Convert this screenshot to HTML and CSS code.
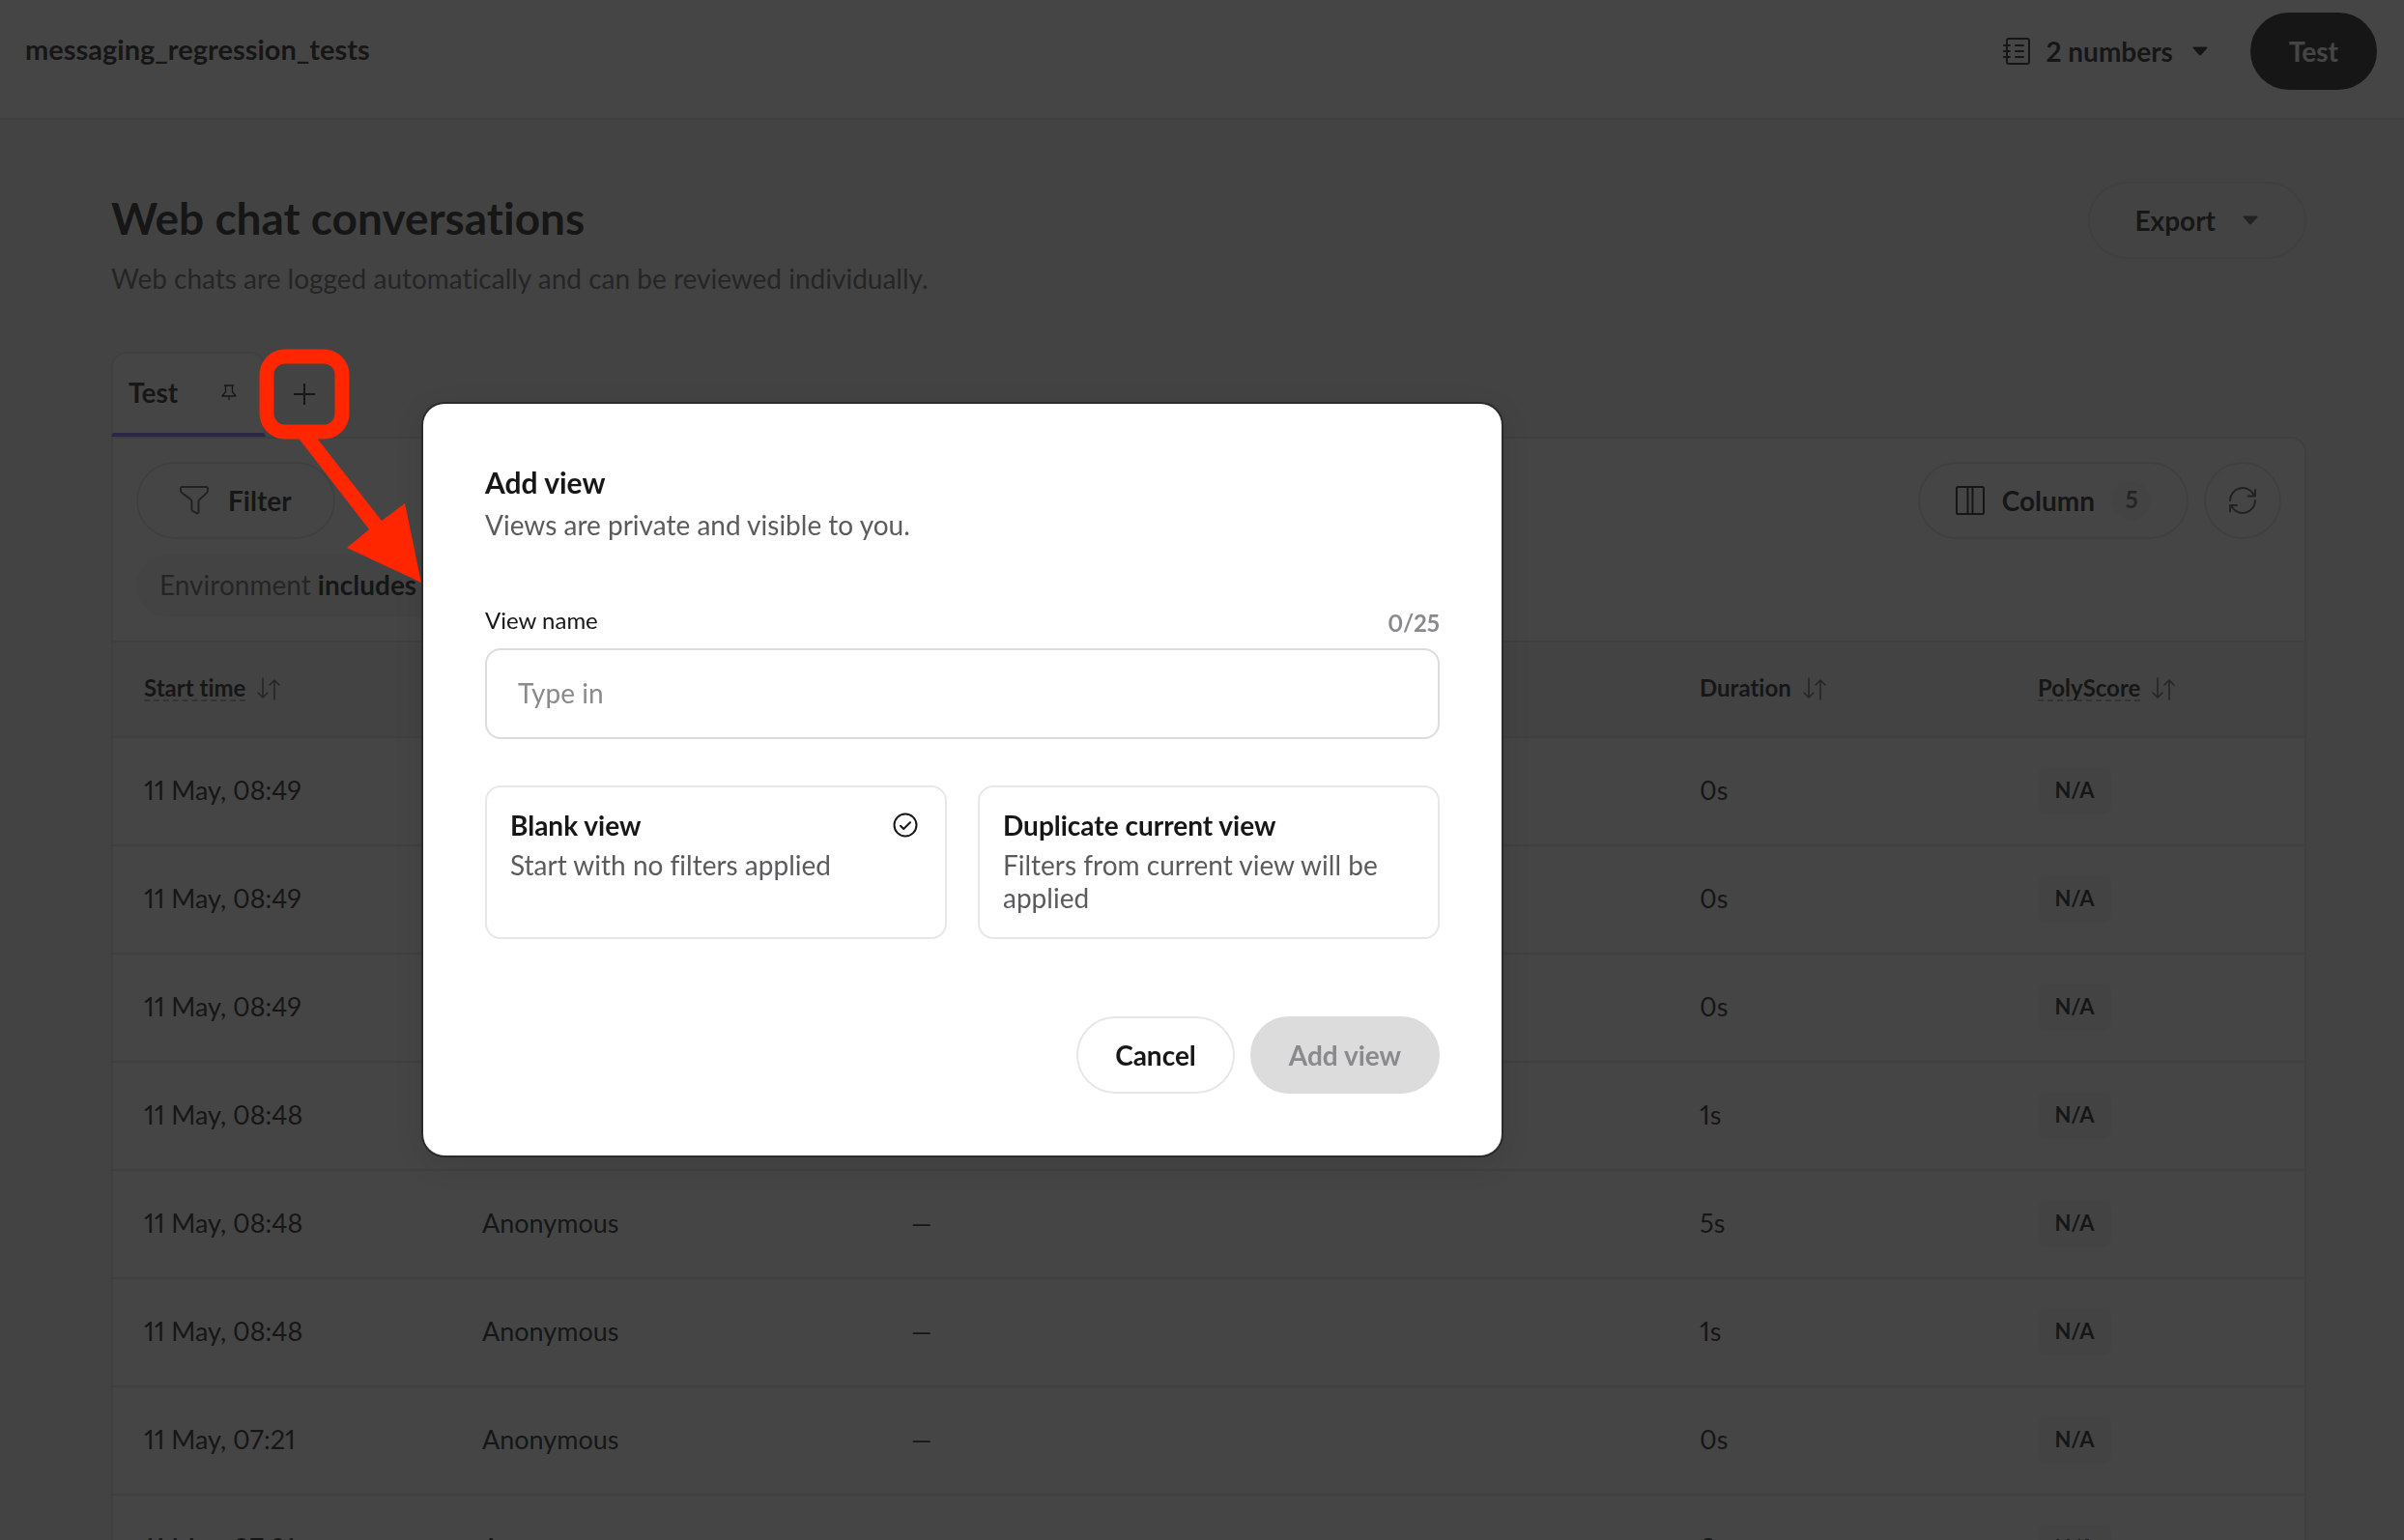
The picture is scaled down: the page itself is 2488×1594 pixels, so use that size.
FILE: index.html
```html
<!DOCTYPE html>
<html lang="en">
<head>
    <meta charset="UTF-8">
    <meta name="viewport" content="width=device-width, initial-scale=1.0">
    <title>Web chat conversations</title>
    <link rel="stylesheet" href="styles.css">
</head>
<body>
    <!-- Shared icons -->
    <svg class="sprite" aria-hidden="true">
        <symbol id="icon-caret" viewBox="0 0 16 10">
            <path d="M1.4 0.5h13.2c0.9 0 1.2 0.9 0.6 1.5L9 9c-0.6 0.6-1.4 0.6-2 0L0.8 2C0.2 1.400 0.500 0.500 1.400 0.500z" fill="currentColor"/>
        </symbol>
        <symbol id="icon-sort" viewBox="0 0 24 24">
            <path d="M6 1v20M1 16l5 5 5-5M18 23V3M13 8l5-5 5 5" fill="none" stroke="currentColor" stroke-width="1.6" stroke-linecap="round" stroke-linejoin="round"/>
        </symbol>
    </svg>

    <header class="topbar">
        <div class="project-name">messaging_regression_tests</div>
        <div class="topbar-actions">
            <button class="numbers-button" type="button">
                <svg class="icon-notebook" viewBox="0 0 28 28" fill="none" stroke="currentColor" stroke-width="2" stroke-linecap="round">
                    <rect x="4" y="1" width="23" height="26" rx="2"/>
                    <path d="M1 8h6M1 14h6M1 20h6M13 8h8M13 14h8M13 20h8"/>
                </svg>
                2 numbers
                <svg class="icon-caret"><use href="#icon-caret"/></svg>
            </button>
            <button class="btn btn-dark" type="button">Test</button>
        </div>
    </header>

    <main class="page">
        <div class="page-head">
            <div>
                <h1>Web chat conversations</h1>
                <p class="page-subtitle">Web chats are logged automatically and can be reviewed individually.</p>
            </div>
            <button class="btn btn-export" type="button">
                Export
                <svg class="icon-caret"><use href="#icon-caret"/></svg>
            </button>
        </div>

        <div class="tabs">
            <button class="tab" type="button">
                Test
                <svg class="icon-pin" viewBox="0 0 16 16" fill="none" stroke="currentColor" stroke-width="1.3" stroke-linejoin="round">
                    <path d="M3 1h10M4.500 1v6.500L1 12h14l-3.500-4.500V1M8 12v4"/>
                </svg>
            </button>
            <button class="tab-add" type="button" aria-label="Add view">
                <svg viewBox="0 0 22 22" stroke="currentColor" stroke-width="2"><path d="M11 0v22M0 11h22"/></svg>
            </button>
        </div>

        <section class="panel">
            <div class="toolbar">
                <div class="toolbar-row">
                    <button class="btn btn-filter" type="button">
                        <svg class="icon-30" viewBox="0 0 30 30" fill="none" stroke="currentColor" stroke-width="2" stroke-linejoin="round">
                            <path d="M2.500 1h25c1 0 1.500 0.600 1.500 1.500v2.500c0 0.800-0.300 1.300-0.900 1.900l-7.600 7c-0.700 0.600-1 1.200-1 2.100v11c0 1.200-0.900 1.700-1.900 1.200l-4.200-2.200c-0.700-0.400-1-0.900-1-1.700v-8.300c0-0.900-0.300-1.500-1-2.100l-9.500-7c-0.600-0.600-0.900-1.100-0.900-1.900v-2.500c0-0.900 0.500-1.500 1.500-1.500z"/>
                        </svg>
                        Filter
                    </button>
                    <div class="toolbar-right">
                        <button class="btn btn-column" type="button">
                            <svg class="icon-30" viewBox="0 0 30 30" fill="none" stroke="currentColor" stroke-width="2">
                                <rect x="1" y="1" width="28" height="28" rx="1.500"/>
                                <path d="M12.500 1v28M17.500 1v28"/>
                            </svg>
                            Column
                            <span class="count">5</span>
                        </button>
                        <button class="btn btn-round" type="button" aria-label="Refresh">
                            <svg class="icon-30" viewBox="0 0 30 30" fill="none" stroke="currentColor" stroke-width="2" stroke-linecap="round" stroke-linejoin="round">
                                <path d="M2 15a13 13 0 0 1 24.500-6L28 10.500M28 4v6.500h-7.500M28 15a13 13 0 0 1-24.500 6L2 20M9 20H2v6.500"/>
                            </svg>
                        </button>
                    </div>
                </div>
                <div class="chips">
                    <span class="chip">Environment <strong>includes</strong> Live</span>
                </div>
            </div>

            <table class="conversations">
                <colgroup>
                    <col class="col-time">
                    <col class="col-user">
                    <col>
                    <col class="col-duration">
                    <col class="col-score">
                </colgroup>
                <thead>
                    <tr>
                        <th><span class="th"><span class="th-label hint">Start time</span><svg class="icon-sort"><use href="#icon-sort"/></svg></span></th>
                        <th><span class="th"><span class="th-label">User</span></span></th>
                        <th><span class="th"><span class="th-label">Summary</span></span></th>
                        <th><span class="th"><span class="th-label">Duration</span><svg class="icon-sort"><use href="#icon-sort"/></svg></span></th>
                        <th><span class="th"><span class="th-label hint">PolyScore</span><svg class="icon-sort"><use href="#icon-sort"/></svg></span></th>
                    </tr>
                </thead>
                <tbody>
                    <tr><td>11 May, 08:49</td><td>Anonymous</td><td>—</td><td>0s</td><td class="score"><span class="pill">N/A</span></td></tr>
                    <tr><td>11 May, 08:49</td><td>Anonymous</td><td>—</td><td>0s</td><td class="score"><span class="pill">N/A</span></td></tr>
                    <tr><td>11 May, 08:49</td><td>Anonymous</td><td>—</td><td>0s</td><td class="score"><span class="pill">N/A</span></td></tr>
                    <tr><td>11 May, 08:48</td><td>Anonymous</td><td>—</td><td>1s</td><td class="score"><span class="pill">N/A</span></td></tr>
                    <tr><td>11 May, 08:48</td><td>Anonymous</td><td>—</td><td>5s</td><td class="score"><span class="pill">N/A</span></td></tr>
                    <tr><td>11 May, 08:48</td><td>Anonymous</td><td>—</td><td>1s</td><td class="score"><span class="pill">N/A</span></td></tr>
                    <tr><td>11 May, 07:21</td><td>Anonymous</td><td>—</td><td>0s</td><td class="score"><span class="pill">N/A</span></td></tr>
                    <tr><td>11 May, 07:21</td><td>Anonymous</td><td>—</td><td>0s</td><td class="score"><span class="pill">N/A</span></td></tr>
                </tbody>
            </table>
        </section>
    </main>

    <div class="overlay"></div>

    <form class="modal" role="dialog" aria-labelledby="modal-title">
        <h2 id="modal-title">Add view</h2>
        <p class="modal-subtitle">Views are private and visible to you.</p>

        <div class="field-head">
            <label for="view-name">View name</label>
            <span class="counter">0/25</span>
        </div>
        <input class="text-input" id="view-name" type="text" maxlength="25" placeholder="Type in">

        <div class="options">
            <label class="option">
                <input class="option-radio" type="radio" name="view-type" value="blank" checked>
                <span class="option-title">
                    Blank view
                    <svg class="icon-check" viewBox="0 0 26 26" fill="none" stroke="currentColor" stroke-width="2" stroke-linecap="round" stroke-linejoin="round">
                        <circle cx="13" cy="13" r="11.500"/>
                        <path d="M8 13.800l3.200 3.200 6.800-6.800"/>
                    </svg>
                </span>
                <span class="option-text">Start with no filters applied</span>
            </label>
            <label class="option">
                <input class="option-radio" type="radio" name="view-type" value="duplicate">
                <span class="option-title">Duplicate current view</span>
                <span class="option-text">Filters from current view will be applied</span>
            </label>
        </div>

        <div class="modal-actions">
            <button class="btn" type="button">Cancel</button>
            <button class="btn btn-disabled" type="submit" disabled>Add view</button>
        </div>
    </form>

    <!-- Callout from the add button to the dialog -->
    <svg class="callout" viewBox="0 0 168 242" aria-hidden="true">
        <rect x="8" y="8" width="78" height="78" rx="19" fill="none" stroke="#ff2600" stroke-width="15"/>
        <path d="M39 90L114 187L91 206L168 242L151 160L127 178L58 90z" fill="#ff2600"/>
    </svg>
</body>
</html>
```
FILE: styles.css
```css
* {
    margin: 0;
    padding: 0;
    box-sizing: border-box;
}

body {
    height: 100vh;
    overflow: hidden;
    font-family: Lato, "Liberation Sans", sans-serif;
    font-size: 28px;
    line-height: 36px;
    font-variant-numeric: proportional-nums;
    font-variant-ligatures: none;
    background: #f5f5f5;
    color: #171717;
}

button,
input {
    font: inherit;
    color: inherit;
}

button {
    cursor: pointer;
}

svg {
    display: block;
    flex: none;
}

.sprite {
    position: absolute;
    width: 0;
    height: 0;
}

/* Icons */
.icon-caret {
    width: 16px;
    height: 10px;
}

.icon-sort {
    width: 24px;
    height: 24px;
    color: #5f5f5f;
}

.icon-notebook {
    width: 28px;
    height: 28px;
}

.icon-pin {
    width: 16px;
    height: 16px;
}

.icon-30 {
    width: 30px;
    height: 30px;
}

.icon-check {
    width: 26px;
    height: 26px;
    margin-right: 4px;
}

/* Buttons */
.btn {
    display: flex;
    align-items: center;
    justify-content: center;
    height: 80px;
    padding: 0 38px;
    border: 2px solid #e7e7e7;
    border-radius: 40px;
    background: transparent;
    font-weight: 700;
    white-space: nowrap;
}

.btn-dark {
    background: #171717;
    border-color: #171717;
    color: #fff;
}

.btn-export {
    gap: 28px;
    padding: 0 48px 0 46px;
}

.btn-export,
.btn-filter,
.btn-column,
.btn-round {
    border-color: #e2e2e2;
}

.btn-export .icon-caret,
.btn-filter .icon-30,
.btn-round .icon-30 {
    color: #4f4f4f;
}

.btn-filter {
    gap: 20px;
    padding: 0 43px;
}

.btn-column {
    gap: 18px;
    padding: 0 37px;
}

.btn-round {
    width: 80px;
    padding: 0;
}

.btn-disabled {
    background: #dcdcdc;
    border-color: #dcdcdc;
    color: #8a8a8d;
    cursor: default;
}

.count {
    width: 40px;
    height: 40px;
    border-radius: 50%;
    background: #f3f3f3;
    font-size: 24px;
    line-height: 38px;
    color: #5f5f5f;
}

/* Top bar */
.topbar {
    display: flex;
    align-items: flex-start;
    justify-content: space-between;
    height: 124px;
    padding: 13px 28px 0 26px;
    background: #fff;
    border-bottom: 2px solid #e2e2e2;
}

.project-name {
    font-size: 29px;
    font-weight: 700;
    line-height: 76px;
}

.topbar-actions {
    display: flex;
    align-items: center;
    gap: 44px;
}

.numbers-button {
    display: flex;
    align-items: center;
    gap: 16px;
    border: none;
    background: transparent;
    font-weight: 700;
}

.numbers-button .icon-caret {
    margin-left: 4px;
}

/* Page head */
.page {
    padding: 64px 101px 0 115px;
}

.page-head {
    display: flex;
    align-items: flex-start;
    justify-content: space-between;
}

h1 {
    padding-top: 10px;
    font-size: 46px;
    font-weight: 700;
    line-height: 56px;
}

.page-subtitle {
    margin-top: 14px;
    line-height: 40px;
    color: #5f5f5f;
}

/* Tabs */
.tabs {
    display: flex;
    margin-top: 56px;
}

.tab {
    display: flex;
    align-items: center;
    justify-content: space-between;
    width: 160px;
    height: 88px;
    padding: 0 28px 2px 16px;
    border: 2px solid #e2e2e2;
    border-bottom: 4px solid #726bff;
    border-radius: 16px 16px 0 0;
    background: #fff;
    font-weight: 700;
}

.tab-add {
    display: flex;
    align-items: center;
    justify-content: center;
    width: 80px;
    border: none;
    background: transparent;
}

.tab-add svg {
    width: 22px;
    height: 22px;
}

/* Panel */
.panel {
    border: 2px solid #e2e2e2;
    border-radius: 0 16px 0 0;
    background: #fff;
}

.toolbar {
    padding: 24px;
}

.toolbar-row {
    display: flex;
    justify-content: space-between;
}

.toolbar-right {
    display: flex;
    gap: 16px;
}

.chips {
    display: flex;
    margin-top: 16px;
}

.chip {
    padding: 0 24px 2px;
    border-radius: 33px;
    background: #f5f5f5;
    line-height: 63px;
    color: #5f5f5f;
}

.chip strong {
    font-weight: 700;
    color: #171717;
}

/* Table */
.conversations {
    width: 100%;
    table-layout: fixed;
    border-collapse: separate;
    border-spacing: 0;
}

.col-time,
.col-duration {
    width: 350px;
}

.col-user {
    width: 444px;
}

.col-score {
    width: 308px;
}

.conversations th {
    height: 101px;
    padding: 0 32px 2px;
    border-top: 2px solid #e2e2e2;
    border-bottom: 2px solid #e2e2e2;
    background: #f5f5f5;
    text-align: left;
    font-size: 24px;
    font-weight: 700;
}

.th {
    display: flex;
    align-items: center;
    gap: 12px;
}

.th-label {
    border-bottom: 2px dashed transparent;
    line-height: 24px;
}

.th-label.hint {
    border-bottom-color: #a5a5a5;
}

.conversations td {
    height: 112px;
    padding: 0 32px 2px;
    border-bottom: 2px solid #e2e2e2;
    font-size: 27px;
}

.conversations .score {
    padding-bottom: 0;
}

.pill {
    display: block;
    width: 76px;
    height: 48px;
    border-radius: 8px;
    background: #f5f5f5;
    font-size: 22px;
    font-weight: 700;
    line-height: 45px;
    text-align: center;
}

/* Modal */
.overlay {
    position: fixed;
    inset: 0;
    background: rgba(23, 23, 23, 0.8);
}

.modal {
    position: absolute;
    top: 418px;
    left: 438px;
    width: 1116px;
    padding: 61px 64px 64px;
    border-radius: 22px;
    background: #fff;
    box-shadow: 0 0 0 2px #2b2b2b, 0 8px 32px rgba(0, 0, 0, 0.1);
}

h2 {
    font-size: 30px;
    font-weight: 700;
    line-height: 40px;
}

.modal-subtitle {
    margin-top: 6px;
    color: #5b5b5e;
}

.field-head {
    display: flex;
    align-items: flex-end;
    justify-content: space-between;
    margin-top: 67px;
    font-size: 24px;
    line-height: 28px;
}

.field-head label {
    padding-bottom: 3px;
}

.counter {
    font-weight: 700;
    color: #8a8a8d;
}

.text-input {
    display: block;
    width: 100%;
    height: 94px;
    margin-top: 12px;
    padding: 0 32px 3px;
    border: 2px solid #dcdcdc;
    border-radius: 16px;
    background: #fff;
}

.text-input::placeholder {
    color: #8a8a8a;
    opacity: 1;
}

.options {
    display: grid;
    grid-template-columns: 1fr 1fr;
    gap: 32px;
    margin-top: 48px;
}

.option {
    position: relative;
    padding: 21px 24px 24px;
    border: 2px solid #e7e7e7;
    border-radius: 16px;
    cursor: pointer;
}

.option-radio {
    position: absolute;
    opacity: 0;
}

.option-title {
    display: flex;
    align-items: center;
    justify-content: space-between;
    font-weight: 700;
}

.option-text {
    display: block;
    margin-top: 6px;
    line-height: 34px;
    color: #5b5b5e;
}

.modal-actions {
    display: flex;
    justify-content: flex-end;
    gap: 16px;
    margin-top: 80px;
}

/* Callout */
.callout {
    position: absolute;
    top: 361px;
    left: 268px;
    width: 168px;
    height: 242px;
}
```
